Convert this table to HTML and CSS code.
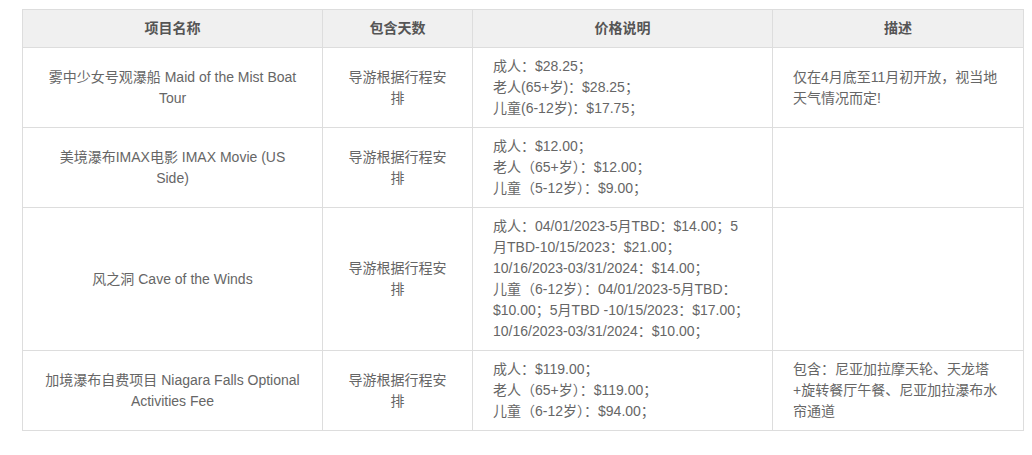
FILE: index.html
```html
<!DOCTYPE html>
<html lang="zh-CN">
<head>
<meta charset="utf-8">
<link rel="stylesheet" href="styles.css">
</head>
<body>
<div class="wrap">
<table class="price-table">
  <colgroup>
    <col class="c-name"><col class="c-days"><col class="c-price"><col class="c-desc">
  </colgroup>
  <thead>
    <tr><th>项目名称</th><th>包含天数</th><th>价格说明</th><th>描述</th></tr>
  </thead>
  <tbody>
    <tr>
      <td class="center">雾中少女号观瀑船 Maid of the Mist Boat Tour</td>
      <td class="center">导游根据行程安排</td>
      <td>成人：$28.25；<br>老人(65+岁)：$28.25；<br>儿童(6-12岁)：$17.75；</td>
      <td>仅在4月底至11月初开放，视当地天气情况而定!</td>
    </tr>
    <tr>
      <td class="center">美境瀑布IMAX电影 IMAX Movie (US Side)</td>
      <td class="center">导游根据行程安排</td>
      <td>成人：$12.00；<br>老人（65+岁）：$12.00；<br>儿童（5-12岁）：$9.00；</td>
      <td></td>
    </tr>
    <tr>
      <td class="center">风之洞 Cave of the Winds</td>
      <td class="center">导游根据行程安排</td>
      <td>成人：04/01/2023-5月TBD：$14.00；5月TBD-10/15/2023：$21.00；10/16/2023-03/31/2024：$14.00；<br>儿童（6-12岁）：04/01/2023-5月TBD：$10.00；5月TBD -10/15/2023：$17.00；10/16/2023-03/31/2024：$10.00；</td>
      <td></td>
    </tr>
    <tr>
      <td class="center">加境瀑布自费项目 Niagara Falls Optional Activities Fee</td>
      <td class="center">导游根据行程安排</td>
      <td>成人：$119.00；<br>老人（65+岁）：$119.00；<br>儿童（6-12岁）：$94.00；</td>
      <td>包含：尼亚加拉摩天轮、天龙塔+旋转餐厅午餐、尼亚加拉瀑布水帘通道</td>
    </tr>
  </tbody>
</table>
</div>
</body>
</html>
```
FILE: styles.css
```css
html, body {
  margin: 0;
  padding: 0;
  background: #fff;
}
.wrap {
  padding: 9px 10px 0 22px;
}
.price-table {
  border-collapse: collapse;
  table-layout: fixed;
  width: 1001px;
  font-family: "Liberation Sans", Arial, "Noto Sans CJK SC", sans-serif;
  font-size: 14px;
  line-height: 21px;
  color: #666;
}
.c-name { width: 300px; }
.c-days { width: 150px; }
.c-price { width: 300px; }
.c-desc { width: 251px; }
.price-table th,
.price-table td {
  border: 1px solid #ddd;
  padding: 8px 20px;
  vertical-align: middle;
  text-align: left;
}
.price-table th {
  background: #f0f0f0;
  color: #555;
  font-weight: bold;
  text-align: center;
}
.price-table td.center {
  text-align: center;
}
```
